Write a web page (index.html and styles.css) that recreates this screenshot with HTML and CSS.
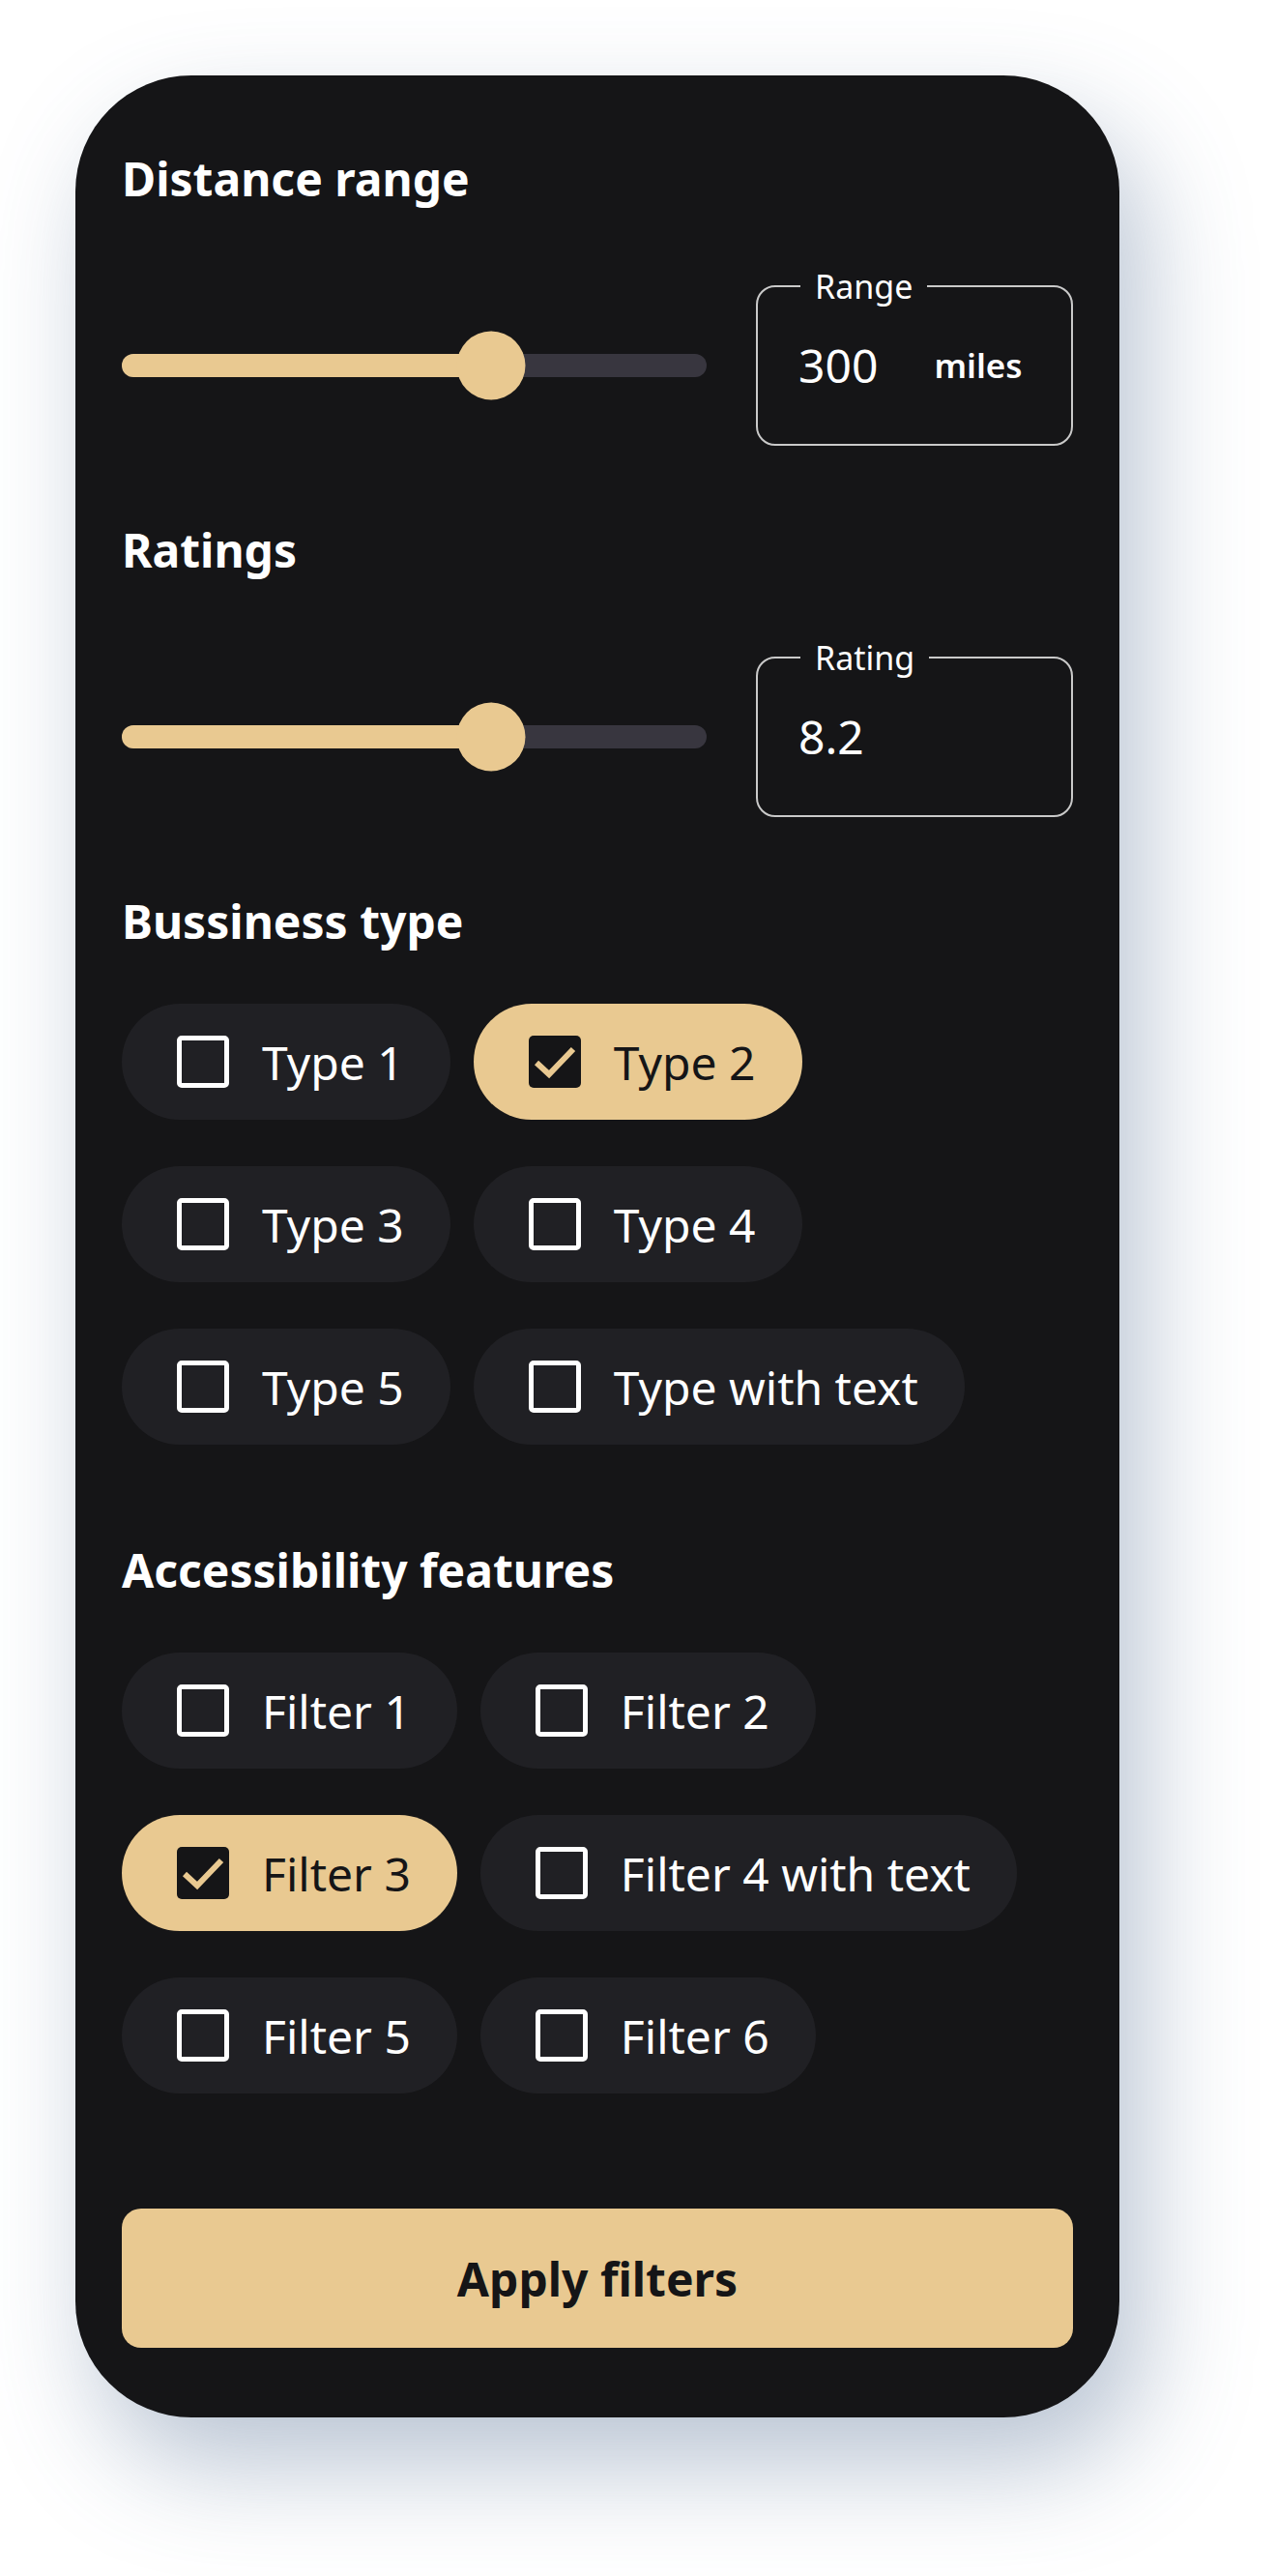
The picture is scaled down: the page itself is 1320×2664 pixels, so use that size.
FILE: index.html
```html
<!DOCTYPE html>
<html lang="en">
<head>
    <meta charset="UTF-8">
    <meta name="viewport" content="width=device-width, initial-scale=1.0">
    <title>Filters</title>
    <link rel="stylesheet" href="styles.css">
</head>
<body>
    <div class="page">
        <div class="card">
            <section class="group">
                <h2 class="group-title">Distance range</h2>
                <div class="range-row">
                    <div class="slider">
                        <div class="track">
                            <div class="fill" style="width: 63.1%"></div>
                            <div class="thumb" style="left: 63.1%"></div>
                        </div>
                    </div>
                    <fieldset class="field">
                        <legend>Range</legend>
                        <div class="field-value">
                            <span class="num">300</span>
                            <span class="unit">miles</span>
                        </div>
                    </fieldset>
                </div>
            </section>

            <section class="group">
                <h2 class="group-title">Ratings</h2>
                <div class="range-row">
                    <div class="slider">
                        <div class="track">
                            <div class="fill" style="width: 63.1%"></div>
                            <div class="thumb" style="left: 63.1%"></div>
                        </div>
                    </div>
                    <fieldset class="field">
                        <legend>Rating</legend>
                        <div class="field-value">
                            <span class="num">8.2</span>
                        </div>
                    </fieldset>
                </div>
            </section>

            <section class="group">
                <h2 class="group-title">Bussiness type</h2>
                <div class="chips">
                    <label class="chip"><span class="box"></span>Type 1</label>
                    <label class="chip checked"><span class="box"><svg viewBox="0 0 54 54"><polyline points="8,28 21,40 46,14"/></svg></span>Type 2</label>
                    <label class="chip"><span class="box"></span>Type 3</label>
                    <label class="chip"><span class="box"></span>Type 4</label>
                    <label class="chip"><span class="box"></span>Type 5</label>
                    <label class="chip"><span class="box"></span>Type with text</label>
                </div>
            </section>

            <section class="group group-wide">
                <h2 class="group-title">Accessibility features</h2>
                <div class="chips">
                    <label class="chip"><span class="box"></span>Filter 1</label>
                    <label class="chip"><span class="box"></span>Filter 2</label>
                    <label class="chip checked"><span class="box"><svg viewBox="0 0 54 54"><polyline points="8,28 21,40 46,14"/></svg></span>Filter 3</label>
                    <label class="chip"><span class="box"></span>Filter 4 with text</label>
                    <label class="chip"><span class="box"></span>Filter 5</label>
                    <label class="chip"><span class="box"></span>Filter 6</label>
                </div>
            </section>

            <button class="apply">Apply filters</button>
        </div>
    </div>
</body>
</html>
```

FILE: styles.css
```css
body {
    margin: 0;
    background-color: #ffffff;
    font-family: "Noto Sans", "Open Sans", sans-serif;
}
.page {
    padding: 78px 78px 164px;
}
.card {
    width: 1080px;
    box-sizing: border-box;
    padding: 75px 48px 72px;
    background-color: #151517;
    border-radius: 120px;
    box-shadow: 24px 50px 110px rgba(70, 100, 140, 0.38);
    color: #ffffff;
}
.group + .group {
    margin-top: 76px;
}
.group-wide {
    margin-top: 98px !important;
}
.group-title {
    margin: 0;
    font-size: 48px;
    line-height: 64px;
    font-weight: 700;
}
.range-row {
    display: flex;
    align-items: flex-end;
    gap: 51px;
    margin-top: 59px;
}
.slider {
    flex: 1;
    height: 166px;
    display: flex;
    align-items: center;
}
.track {
    position: relative;
    width: 100%;
    height: 24px;
    border-radius: 12px;
    background-color: #38363f;
}
.fill {
    height: 100%;
    border-radius: 12px;
    background-color: #e9c991;
}
.thumb {
    position: absolute;
    top: 50%;
    width: 71px;
    height: 71px;
    border-radius: 50%;
    background-color: #e9c991;
    transform: translate(-50%, -50%);
}
.field {
    width: 328px;
    box-sizing: border-box;
    margin: 0;
    padding: 32px 20px 51px 42px;
    border: 2px solid #c9c9c9;
    border-radius: 20px;
}
.field legend {
    margin-left: 2px;
    padding: 0 15px;
    font-size: 34px;
    line-height: 40px;
}
.field-value {
    display: flex;
    align-items: center;
    gap: 58px;
    height: 60px;
    line-height: 60px;
}
.num {
    font-size: 48px;
}
.unit {
    font-size: 35px;
    font-weight: 600;
}
.chips {
    display: flex;
    flex-wrap: wrap;
    gap: 48px 24px;
    margin-top: 53px;
}
.chip {
    display: flex;
    align-items: center;
    gap: 34px;
    height: 120px;
    padding: 0 48px 0 57px;
    border-radius: 60px;
    background-color: #202024;
    font-size: 48px;
    cursor: pointer;
}
.box {
    width: 54px;
    height: 54px;
    box-sizing: border-box;
    border: 5px solid #ffffff;
    border-radius: 5px;
}
.chip.checked {
    background-color: #e9c991;
    color: #151517;
}
.chip.checked .box {
    border: none;
    background-color: #151517;
}
.box svg {
    display: block;
    width: 54px;
    height: 54px;
}
.box polyline {
    fill: none;
    stroke: #e9c991;
    stroke-width: 6;
}
.apply {
    display: block;
    width: 100%;
    height: 144px;
    margin-top: 119px;
    border: none;
    border-radius: 20px;
    background-color: #e9c991;
    color: #151517;
    font-family: inherit;
    font-size: 48px;
    font-weight: 700;
    cursor: pointer;
}
```
